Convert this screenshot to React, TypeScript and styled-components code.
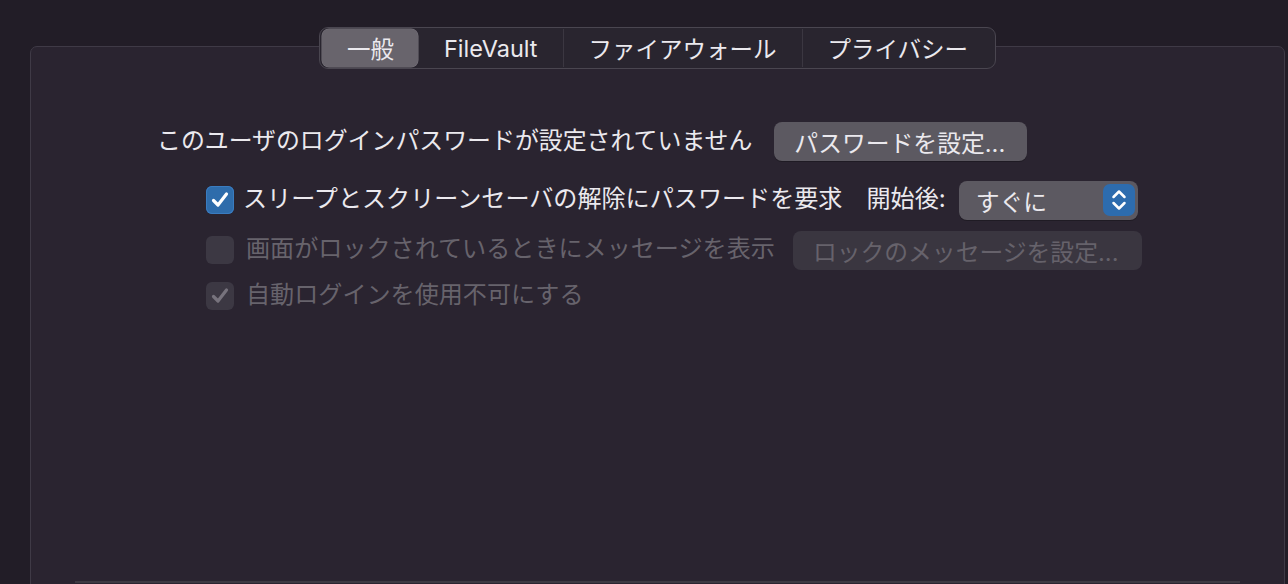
import React from 'react';
import styled, { createGlobalStyle } from 'styled-components';

const GlobalStyle = createGlobalStyle`
  html, body {
    margin: 0;
    padding: 0;
    background: #221d27;
    overflow: hidden;
  }
  body {
    font-family: Inter, "Noto Sans CJK JP", sans-serif;
    color: #e9e7ec;
  }
`;

const Page = styled.div`
  width: 1288px;
  height: 584px;
  overflow: hidden;
  padding: 46px 3px 0 30px;
  box-sizing: border-box;
`;

const Panel = styled.div`
  height: 590px;
  box-sizing: border-box;
  background: #2a2430;
  border: 1.5px solid #3f3a46;
  border-radius: 7px;
  display: flex;
  flex-direction: column;
  align-items: center;
`;

const TabBar = styled.div`
  margin-top: -20px;
  height: 42px;
  box-sizing: border-box;
  display: flex;
  align-items: center;
  background: #29252f;
  border: 1px solid #4a4650;
  border-radius: 9px;
  padding: 0 2px;
`;

const Tab = styled.div<{ $active?: boolean; $sep?: boolean }>`
  height: 38px;
  display: flex;
  align-items: center;
  padding: 0 ${p => (p.$active ? '24px' : '25px')};
  font-size: 23.5px;
  color: #ebe9ee;
  border-radius: 7px;
  background: ${p => (p.$active ? '#68646c' : 'transparent')};
  box-shadow: ${p => (p.$active ? '0 0 0 0.5px #77737b' : 'none')};
  border-left: ${p => (p.$sep ? '1px solid #3b3741' : '1px solid transparent')};
  border-top-left-radius: ${p => (p.$sep ? '0' : '7px')};
  border-bottom-left-radius: ${p => (p.$sep ? '0' : '7px')};
`;

const Content = styled.div`
  align-self: stretch;
  display: flex;
  flex-direction: column;
  padding-left: 126px;
  flex: 1;
`;

const Row = styled.div<{ $indent?: boolean; $mt: number; $size?: number }>`
  display: flex;
  align-items: center;
  height: 40px;
  margin-top: ${p => p.$mt}px;
  padding-left: ${p => (p.$indent ? '49px' : '0')};
  font-size: ${p => p.$size ?? 24.1}px;
  white-space: nowrap;
`;

const Label = styled.span<{ $disabled?: boolean; $gap?: number }>`
  color: ${p => (p.$disabled ? '#67636c' : '#ebe9ee')};
  margin-left: ${p => p.$gap ?? 0}px;
  line-height: 1;
  padding-bottom: 1px;
`;

const PushButton = styled.div<{ $disabled?: boolean; $gap: number; $w: number }>`
  margin-left: ${p => p.$gap}px;
  width: ${p => p.$w}px;
  height: 39px;
  box-sizing: border-box;
  display: flex;
  align-items: center;
  padding-left: 20px;
  border-radius: 8px;
  font-size: 23.8px;
  background: ${p => (p.$disabled ? '#3a3640' : '#5c5961')};
  color: ${p => (p.$disabled ? '#66626b' : '#ebe9ee')};
  box-shadow: ${p => (p.$disabled ? 'none' : '0 1px 0 rgba(0,0,0,0.25)')};
`;

const Check = styled.div<{ $checked?: boolean; $disabled?: boolean }>`
  width: 28px;
  height: 28px;
  flex: none;
  border-radius: 6px;
  display: flex;
  align-items: center;
  justify-content: center;
  background: ${p => (p.$checked && !p.$disabled ? '#2e6cab' : '#3c3843')};
  box-shadow: ${p => (p.$checked && !p.$disabled ? 'inset 0 0 0 1px #3a7cc0' : 'none')};
`;

const Popup = styled.div`
  margin-left: 13px;
  width: 179px;
  height: 39px;
  box-sizing: border-box;
  display: flex;
  align-items: center;
  justify-content: space-between;
  padding: 0 3px 0 17px;
  border-radius: 8px;
  background: #5c5961;
  font-size: 23.8px;
  color: #ebe9ee;
  box-shadow: 0 1px 0 rgba(0,0,0,0.25);
`;

const Stepper = styled.div`
  width: 32px;
  height: 32px;
  border-radius: 7px;
  background: #2d6cae;
  display: flex;
  align-items: center;
  justify-content: center;
`;

const Footer = styled.div`
  align-self: stretch;
  margin: 0 44px;
  height: 52px;
  border-top: 2px solid #3d3942;
`;

const CheckMark: React.FC<{ color: string }> = ({ color }) => (
  <svg width="20" height="20" viewBox="0 0 20 20">
    <path d="M3.5 10.5 L8 15 L16.5 4" fill="none" stroke={color} strokeWidth="3.2" strokeLinecap="round" strokeLinejoin="round" />
  </svg>
);

const Chevrons = () => (
  <svg width="20" height="26" viewBox="0 0 20 26">
    <path d="M4.5 10 L10 4.5 L15.5 10" fill="none" stroke="#fff" strokeWidth="2.5" strokeLinecap="round" strokeLinejoin="round" />
    <path d="M4.5 16 L10 21.5 L15.5 16" fill="none" stroke="#fff" strokeWidth="2.5" strokeLinecap="round" strokeLinejoin="round" />
  </svg>
);

const tabs = ['一般', 'FileVault', 'ファイアウォール', 'プライバシー'];

export default function App() {
  return (
    <>
      <GlobalStyle />
      <Page>
        <Panel>
          <TabBar>
            {tabs.map((t, i) => (
              <Tab key={t} $active={i === 0} $sep={i > 1}>{t}</Tab>
            ))}
          </TabBar>
          <Content>
            <Row $mt={52} $size={23.9}>
              <Label>このユーザのログインパスワードが設定されていません</Label>
              <PushButton $gap={22} $w={253}>パスワードを設定...</PushButton>
            </Row>
            <Row $indent $mt={19}>
              <Check $checked><CheckMark color="#ffffff" /></Check>
              <Label $gap={9}>スリープとスクリーンセーバの解除にパスワードを要求</Label>
              <Label $gap={24}>開始後:</Label>
              <Popup>
                すぐに
                <Stepper><Chevrons /></Stepper>
              </Popup>
            </Row>
            <Row $indent $mt={10}>
              <Check $disabled />
              <Label $disabled $gap={12}>画面がロックされているときにメッセージを表示</Label>
              <PushButton $disabled $gap={18} $w={349}>ロックのメッセージを設定...</PushButton>
            </Row>
            <Row $indent $mt={6}>
              <Check $checked $disabled><CheckMark color="#77737d" /></Check>
              <Label $disabled $gap={12}>自動ログインを使用不可にする</Label>
            </Row>
          </Content>
          <Footer />
        </Panel>
      </Page>
    </>
  );
}
